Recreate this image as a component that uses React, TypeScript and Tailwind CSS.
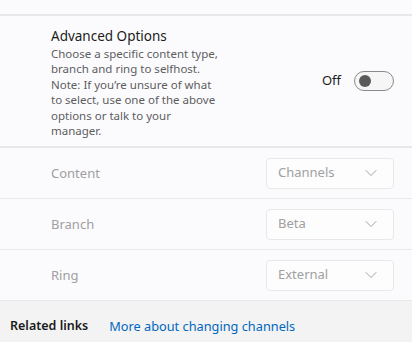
import { ChevronDown } from 'lucide-react';

const font = { fontFamily: '"Segoe UI", "Noto Sans", sans-serif' };

const SelectRow = ({ label, value }: { label: string; value: string }) => (
  <div className="flex h-[50px] items-center justify-between bg-[#fbfbfd] pl-[51px] pr-[18px]">
    <span className="pt-[1px] text-[13px] text-[#a0a0a0]">{label}</span>
    <div className="flex h-[31px] w-[128px] items-center justify-between rounded-[4px] border border-[#e8e8e8] bg-[#fdfdfd] pl-[11px] pr-[12px]">
      <span className="text-[13px] text-[#a0a0a0]">{value}</span>
      <ChevronDown className="h-[20px] w-[20px] text-[#9a9a9a]" strokeWidth={1.1} />
    </div>
  </div>
);

export default function App() {
  return (
    <div className="flex h-[342px] w-[412px] flex-col bg-[#e8e8e8]" style={font}>
      <div className="h-[14px] bg-[#fbfbfd]" />
      <div className="mt-[2px] flex h-[130px] items-center justify-between bg-[#fbfbfd] pl-[51px] pr-[18px]">
        <div className="w-[170px] pt-[2px]">
          <div className="text-[13.5px] leading-[20px] text-[#1b1b1b]">Advanced Options</div>
          <p className="text-[11.5px] leading-[15.5px] text-[#5d5d5d]">
            Choose a specific content type, branch and ring to selfhost.
            <br />
            Note: If you’re unsure of what to select, use one of the above options or talk to your manager.
          </p>
        </div>
        <div className="flex items-center gap-[13px]">
          <span className="text-[13px] text-[#1b1b1b]">Off</span>
          <div className="flex h-[20px] w-[40px] items-center rounded-full border border-[#8a8a8a] bg-[#f6f6f6] pl-[4px]">
            <div className="h-[12px] w-[12px] rounded-full bg-[#5a5a5a]" />
          </div>
        </div>
      </div>
      <div className="mt-[2px] flex flex-col gap-[1px]">
        <SelectRow label="Content" value="Channels" />
        <SelectRow label="Branch" value="Beta" />
        <SelectRow label="Ring" value="External" />
      </div>
      <div className="mt-[1px] flex flex-1 items-center gap-[21px] bg-[#f3f3f3] pl-[10px] pt-[10px]">
        <span className="text-[12.5px] font-semibold text-[#1b1b1b]">Related links</span>
        <span className="text-[12.75px] text-[#0067c0]">More about changing channels</span>
      </div>
    </div>
  );
}
